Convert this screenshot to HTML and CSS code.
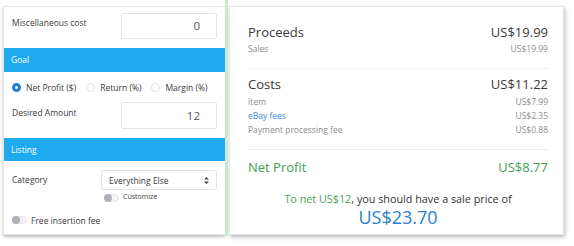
FILE: index.html
```html
<!DOCTYPE html>
<html>
<head>
<meta charset="utf-8">
<link rel="stylesheet" href="styles.css">
</head>
<body>
<div class="wrap">
  <div class="left">
    <div class="row row-misc">
      <div class="label">Miscellaneous cost</div>
      <div class="input">0</div>
    </div>
    <div class="header">Goal</div>
    <div class="radios">
      <span class="radio on"></span><span class="rlabel">Net Profit ($)</span>
      <span class="radio"></span><span class="rlabel">Return (%)</span>
      <span class="radio"></span><span class="rlabel">Margin (%)</span>
    </div>
    <div class="row row-desired">
      <div class="label">Desired Amount</div>
      <div class="input">12</div>
    </div>
    <div class="header header-listing">Listing</div>
    <div class="row row-cat">
      <div class="label">Category</div>
      <div class="select">
        <span>Everything Else</span>
        <svg class="arrows" width="5" height="7" viewBox="0 0 5 7"><path d="M2.5 0 L5 2.6 L0 2.6 Z M2.5 7 L5 4.4 L0 4.4 Z" fill="#444"/></svg>
      </div>
    </div>
    <div class="custom">
      <span class="toggle"></span><span class="clabel">Customize</span>
    </div>
    <div class="free">
      <span class="toggle"></span><span class="flabel">Free insertion fee</span>
    </div>
    <div class="row row-partial">
      <div class="input"></div>
    </div>
  </div>
  <div class="strip"></div>
  <div class="right">
    <div class="line big"><span>Proceeds</span><span>US$19.99</span></div>
    <div class="line small"><span>Sales</span><span>US$19.99</span></div>
    <div class="divider d1"></div>
    <div class="line big costs"><span>Costs</span><span>US$11.22</span></div>
    <div class="line small first"><span>Item</span><span>US$7.99</span></div>
    <div class="line small"><span class="link">eBay fees</span><span>US$2.35</span></div>
    <div class="line small"><span>Payment processing fee</span><span>US$0.88</span></div>
    <div class="divider d2"></div>
    <div class="line big net"><span>Net Profit</span><span>US$8.77</span></div>
    <div class="tonet"><span class="g">To net US$12</span>, you should have a sale price of</div>
    <div class="price">US$23.70</div>
  </div>
</div>
</body>
</html>
```
FILE: styles.css
```css
html, body {
  margin: 0;
  padding: 0;
  background: #fff;
}
body {
  width: 574px;
  height: 246px;
  overflow: hidden;
  font-family: "Open Sans", "DejaVu Sans", sans-serif;
  color: #333;
}
.wrap {
  display: flex;
  align-items: flex-start;
  padding-left: 3px;
}
.left {
  margin-top: 6px;
  width: 221px;
  height: 227px;
  border: 1px solid #e4e4e4;
  border-right: none;
  box-shadow: 0 2px 3px rgba(0,0,0,0.25);
  overflow: hidden;
  background: #fff;
}
.strip {
  width: 3px;
  height: 236px;
  background: #cdeccf;
}
.right {
  margin-top: 6px;
  margin-left: 1px;
  width: 300px;
  height: 211px;
  padding: 16px 15px 0 18px;
  border: 1px solid #e6e6e6;
  box-shadow: 1px 2px 4px rgba(0,0,0,0.28);
  background: #fff;
}
.row {
  display: flex;
  justify-content: space-between;
  align-items: flex-start;
  padding: 0 8px 0 8px;
}
.label {
  font-size: 8.5px;
  line-height: 12px;
  color: #3a3a3a;
}
.input {
  width: 78px;
  height: 24px;
  border: 1px solid #e4e4e4;
  border-radius: 2px;
  font-size: 11.5px;
  line-height: 24px;
  text-align: right;
  padding-right: 16px;
  color: #555;
}
.row-misc { margin-top: 6px; }
.row-misc .label { padding-top: 4px; }
.header {
  margin-top: 9px;
  height: 24px;
  line-height: 24px;
  background: #1fa9ef;
  color: #fff;
  font-size: 8.5px;
  padding-left: 7px;
}
.header-listing { height: 23px; line-height: 23px; }
.radios {
  margin-top: 9px;
  height: 12px;
  display: flex;
  align-items: center;
  padding-left: 8px;
  font-size: 8.5px;
  color: #3a3a3a;
}
.radio {
  width: 9px;
  height: 9px;
  box-sizing: border-box;
  border-radius: 50%;
  border: 1px solid #e2e2e2;
  margin-right: 5px;
}
.radio.on {
  border: 3px solid #1e7fd8;
  background: #fff;
}
.rlabel { margin-right: 10px; }
.row-desired { margin-top: 9px; }
.row-desired .input { height: 25px; line-height: 25px; }
.row-desired .label { padding-top: 5px; }
.row-cat { margin-top: 9px; }
.row-cat .label { padding-top: 4px; }
.select {
  width: 100px;
  height: 18px;
  border: 1px solid #e4e4e4;
  border-radius: 2px;
  display: flex;
  align-items: center;
  justify-content: space-between;
  padding: 0 7px 0 7px;
  font-size: 8.5px;
  color: #3a3a3a;
}
.arrows { display: block; }
.custom {
  margin-top: 4px;
  display: flex;
  align-items: center;
  padding-left: 100px;
  height: 8px;
}
.toggle {
  position: relative;
  width: 15px;
  height: 8px;
  box-sizing: border-box;
  border-radius: 4px;
  background: #f4f4f4;
  border: 1px solid #e6e6e6;
  flex: none;
}
.toggle::before {
  content: "";
  position: absolute;
  left: -1px;
  top: -1px;
  width: 8px;
  height: 8px;
  border-radius: 50%;
  background: #b0b0b8;
}
.clabel {
  font-size: 7px;
  margin-left: 4px;
  margin-top: -4px;
  color: #444;
}
.free {
  margin-top: 14px;
  display: flex;
  align-items: center;
  padding-left: 8px;
  height: 8px;
}
.flabel {
  font-size: 8.5px;
  margin-left: 4px;
  color: #3a3a3a;
}
.row-partial { margin-top: 10px; justify-content: flex-end; }
.line {
  display: flex;
  justify-content: space-between;
  align-items: center;
}
.big {
  font-size: 13px;
  line-height: 18px;
  color: #3a3a3a;
}
.small {
  font-size: 8.5px;
  line-height: 16px;
  color: #8c8c8c;
}
.first { margin-top: 2px; }
.costs ~ .small { line-height: 14px; }
.link { color: #3b8bd9; }
.divider {
  height: 1px;
  background: #efefef;
}
.d1 { margin-top: 11px; }
.costs { margin-top: 6px; }
.d2 { margin-top: 12px; }
.net { margin-top: 8px; color: #43a052; }
.tonet {
  margin-top: 16px;
  text-align: center;
  font-size: 10.8px;
  line-height: 14px;
  color: #333;
}
.g { color: #4aa35a; }
.price {
  text-align: center;
  font-size: 18px;
  line-height: 22px;
  color: #2a7fd0;
}
```
